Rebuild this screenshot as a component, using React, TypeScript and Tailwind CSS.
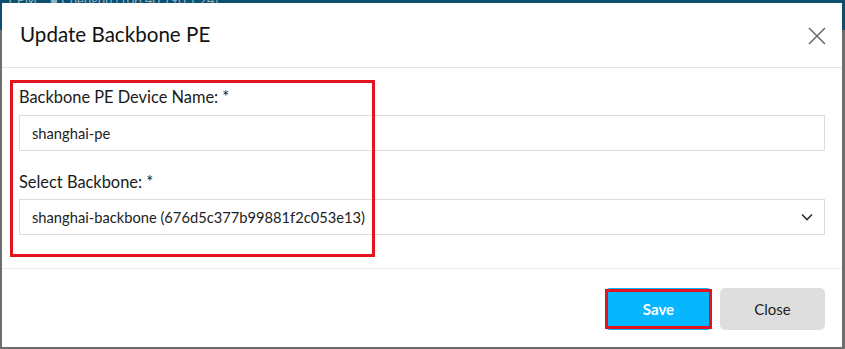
export default function App() {
  return (
    <div className="relative h-[349px] w-[845px] overflow-hidden bg-[#6e6e6e] font-['Lato','Noto_Sans',sans-serif]">
      {/* page behind the modal */}
      <div className="absolute left-0 top-0 h-[30px] w-full overflow-hidden bg-[#0d4f6e]">
        <p className="-mt-[9px] whitespace-nowrap pl-[6px] text-[13px] text-[#8fb3c6]">
          1 PM &nbsp;&nbsp;&nbsp;● Chengdu (106.40.190.1.24)
        </p>
      </div>

      <div className="relative ml-[2px] mt-[3px] flex h-[344px] w-[840px] flex-col bg-white">
        <div className="flex h-[65px] items-center justify-between border-b border-[#e2e2e2] pl-[18px] pr-[16px]">
          <h2 className="-mt-[1px] text-[20.6px] text-[#111]">Update Backbone PE</h2>
          <svg width="18" height="18" viewBox="0 0 18 18" className="mt-[1px]">
            <path d="M1 1L17 17M17 1L1 17" stroke="#6b6b6b" strokeWidth="1.6" fill="none" />
          </svg>
        </div>

        <div className="relative border-b border-[#ececec] px-[17px] pb-[33px] pt-[17px]">
          <label className="block text-[16.4px] leading-[24px] text-[#1a1a1a]">Backbone PE Device Name: *</label>
          <div className="mt-[6px] flex h-[36px] items-center border border-[#dcdcdc] px-[12px] text-[14.7px] text-[#222]">
            shanghai-pe
          </div>
          <label className="mt-[19px] block text-[16.4px] leading-[24px] text-[#1a1a1a]">Select Backbone: *</label>
          <div className="mt-[5px] flex h-[36px] items-center justify-between border border-[#dcdcdc] pl-[12px] pr-[11px] text-[14.7px] text-[#222]">
            <span>shanghai-backbone (676d5c377b99881f2c053e13)</span>
            <svg width="12" height="8" viewBox="0 0 12 8">
              <path d="M1 1.5L6 6.5L11 1.5" stroke="#333" strokeWidth="1.6" fill="none" />
            </svg>
          </div>
          <div className="pointer-events-none absolute left-[8px] top-[12px] h-[177px] w-[365px] border-[3px] border-[#e3141f]" />
        </div>

        <div className="flex justify-end gap-[9px] px-[17px] pt-[19px]">
          <div className="relative">
            <button className="h-[42px] w-[105px] rounded-[4px] bg-[#07b6fd] text-[15px] font-bold text-white">Save</button>
            <div className="pointer-events-none absolute -left-[1px] top-[1px] h-[40px] w-[107px] border-[3px] border-[#e3141f]" />
          </div>
          <button className="h-[42px] w-[105px] rounded-[5px] bg-[#dedede] text-[15px] text-[#222]">Close</button>
        </div>
      </div>
    </div>
  );
}
